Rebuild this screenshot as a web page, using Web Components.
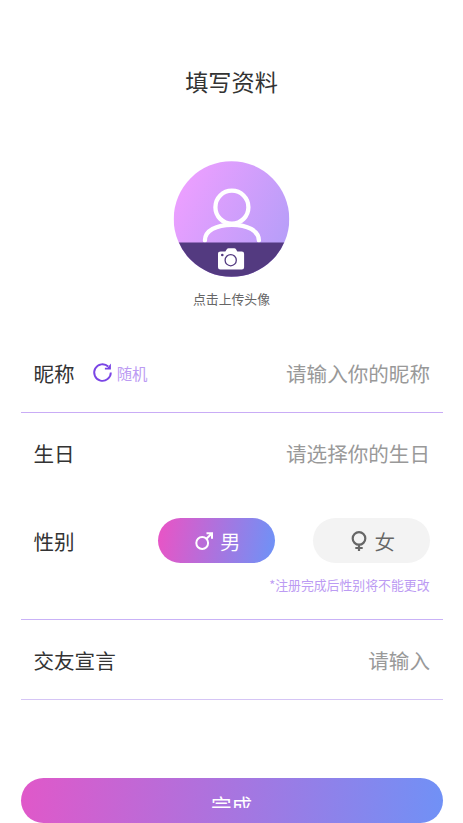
<!DOCTYPE html>
<html lang="zh-CN">
<head>
<meta charset="utf-8">
<title>填写资料</title>
<style>
html,body{margin:0;height:823px;overflow:hidden;background:#fff}
body{font-family:"Noto Sans CJK SC",sans-serif;color:#333}
</style>
</head>
<body>
<profile-page></profile-page>
<script>
function define(name, html){
  const t=document.createElement('template');
  t.innerHTML=html;
  customElements.define(name,class extends HTMLElement{
    constructor(){super();this.attachShadow({mode:'open'}).append(t.content.cloneNode(true));}
  });
}
define('page-title',`<style>:host{display:flex;justify-content:center;align-items:center;height:36px;font-size:23.15px;line-height:36px;color:#333}</style><slot></slot>`);

define('avatar-upload',`<style>
:host{display:flex;flex-direction:column;align-items:center;font-size:12.86px;color:#666}
svg{display:block}
.t{height:20px;line-height:20px;margin-top:12px}
</style>
<svg width="117" height="116" viewBox="-.5 0 117 116">
<defs><linearGradient id="g" x1="0" y1=".25" x2="1" y2=".75"><stop offset=".05" stop-color="#eb9fff"/><stop offset="1" stop-color="#b49ef8"/></linearGradient>
<clipPath id="c"><circle cx="58" cy="58" r="57.8"/></clipPath></defs>
<g clip-path="url(#c)"><rect width="116" height="116" fill="url(#g)"/>
<g fill="none" stroke="#fff" stroke-width="4.300" stroke-linecap="round"><circle cx="58.400" cy="46.200" r="16.500"/><path d="M31.400 79.500C31.400 69.500 43 63.900 58.400 63.900S85.400 69.500 85.400 79.500"/></g>
<rect y="81.500" width="116" height="35" fill="#533a80"/></g>
<path fill="#fff" d="M47.300 90.500h4.500l1.500-2.300q.6-1 1.800-1h5.600q1.200 0 1.800 1l1.300 2.300h4.500q2.300 0 2.300 2.300v13.400q0 2.300-2.300 2.300H46.800q-2.300 0-2.300-2.300V92.800q0-2.300 2.800-2.300z"/>
<circle cx="57.200" cy="99.200" r="5.600" fill="none" stroke="#533a80" stroke-width="1.300"/><circle cx="48.800" cy="94" r="1.300" fill="#533a80"/>
</svg>
<div class="t"><slot></slot></div>`);

define('form-row',`<style>
:host{display:flex;align-items:center;justify-content:space-between;box-sizing:border-box;padding:0 12.500px 0 13px;font-size:20.57px;line-height:30px;color:#333}
.l{display:flex;align-items:center}
.v{color:#999}
</style><div class="l"><slot name="label"></slot><slot name="extra"></slot></div><div class="v"><slot></slot></div>`);

define('random-button',`<style>
:host{display:flex;align-items:center;margin-left:17.500px;gap:3.500px;font-size:15.43px;line-height:24px;color:#bc9bf3}
</style><svg width="21" height="21" viewBox="0 0 21 21"><path fill="none" stroke="#7a45e5" stroke-width="1.900" d="M18.800 10.500A8.300 8.300 0 1 1 16.200 4.500"/><path fill="#7a45e5" d="M18.900 1.500V7.600H12.900V5.800L15.500 5.700z"/></svg><slot></slot>`);

define('gender-pill',`<style>
:host{display:flex;align-items:center;justify-content:center;box-sizing:border-box;width:117px;height:45px;padding-left:2px;border-radius:23px;background:#f3f3f3;color:#666;font-size:20.57px;gap:5.500px;line-height:30px;font-weight:350}
:host([selected]){background:linear-gradient(100deg,#e556c7 5%,#7091f6 97%);color:#fff}
::slotted(svg){display:block}
</style><slot name="icon"></slot><slot></slot>`);

define('submit-button',`<style>
:host{display:flex;justify-content:center;box-sizing:border-box;height:45px;border-radius:23px;background:linear-gradient(94deg,#e058c9,#7091f6);color:#fff;font-size:20.57px}
div{height:30px;overflow:hidden;line-height:55px}
</style><div><slot></slot></div>`);

define('profile-page',`<style>
:host{display:flex;flex-direction:column;height:823px;box-sizing:border-box;padding:63px 20.500px 0}
avatar-upload{margin-top:62px}
.name{height:80px;margin-top:24px;border-bottom:1px solid #c9acf6}
.birth{height:80px}
.sex{height:95px;padding-right:13px}
.pills{display:flex;gap:37.500px}
.note{height:24px;margin:-15px 13px 0 0;text-align:right;font-size:12.860px;line-height:24px;color:#bc9bf3}
.say{height:81px;margin-top:22px;border-top:1px solid #c9b2f7;border-bottom:1px solid #d5c5f5}
submit-button{margin-top:78px}
</style>
<page-title>填写资料</page-title>
<avatar-upload>点击上传头像</avatar-upload>
<form-row class="name"><span slot="label">昵称</span><random-button slot="extra">随机</random-button>请输入你的昵称</form-row>
<form-row class="birth"><span slot="label">生日</span>请选择你的生日</form-row>
<form-row class="sex"><span slot="label">性别</span><div class="pills">
<gender-pill selected><svg slot="icon" width="20" height="20" viewBox="0 0 20 20" fill="none" stroke="#fff" stroke-width="2"><circle cx="8.200" cy="12" r="5.900"/><path d="M12.500 7.700L17.200 3M12.500 2.200H18V7.800"/></svg>男</gender-pill>
<gender-pill><svg slot="icon" width="20" height="20" viewBox="0 0 20 20" fill="none" stroke="#666" stroke-width="2.200"><circle cx="10" cy="7.400" r="6.300"/><path d="M10 13.500V20M6.300 17H13.700"/></svg>女</gender-pill></div></form-row>
<div class="note">*注册完成后性别将不能更改</div>
<form-row class="say"><span slot="label">交友宣言</span>请输入</form-row>
<submit-button>完成</submit-button>`);
</script>
</body>
</html>
